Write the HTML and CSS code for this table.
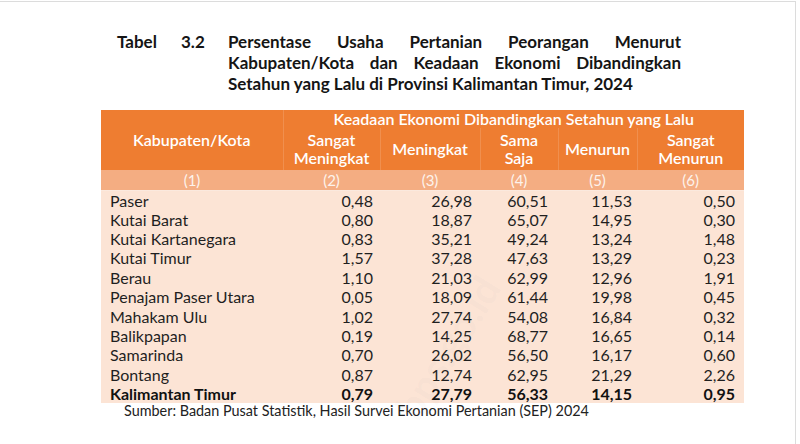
FILE: index.html
```html
<!DOCTYPE html>
<html lang="id">
<head>
<meta charset="utf-8">
<title>Tabel 3.2</title>
<link rel="stylesheet" href="styles.css">
</head>
<body>
<div class="frame">
  <div class="page">
    <div class="title">
      <div class="t-label">Tabel</div>
      <div class="t-num">3.2</div>
      <div class="t-text">Persentase Usaha Pertanian Peorangan Menurut Kabupaten/Kota dan Keadaan Ekonomi Dibandingkan Setahun yang Lalu di Provinsi Kalimantan Timur, 2024</div>
    </div>
    <table class="data">
      <colgroup>
        <col class="w1"><col class="w2"><col class="w3"><col class="w4"><col class="w5"><col class="w6">
      </colgroup>
      <thead>
        <tr class="h1">
          <th rowspan="2" class="kab">Kabupaten/Kota</th>
          <th colspan="5" class="span">Keadaan Ekonomi Dibandingkan Setahun yang Lalu</th>
        </tr>
        <tr class="h2">
          <th>Sangat<br>Meningkat</th>
          <th>Meningkat</th>
          <th>Sama<br>Saja</th>
          <th>Menurun</th>
          <th>Sangat<br>Menurun</th>
        </tr>
        <tr class="h3">
          <th>(1)</th><th>(2)</th><th>(3)</th><th>(4)</th><th>(5)</th><th>(6)</th>
        </tr>
      </thead>
      <tbody>
        <tr><td>Paser</td><td>0,48</td><td>26,98</td><td>60,51</td><td>11,53</td><td>0,50</td></tr>
        <tr><td>Kutai Barat</td><td>0,80</td><td>18,87</td><td>65,07</td><td>14,95</td><td>0,30</td></tr>
        <tr><td>Kutai Kartanegara</td><td>0,83</td><td>35,21</td><td>49,24</td><td>13,24</td><td>1,48</td></tr>
        <tr><td>Kutai Timur</td><td>1,57</td><td>37,28</td><td>47,63</td><td>13,29</td><td>0,23</td></tr>
        <tr><td>Berau</td><td>1,10</td><td>21,03</td><td>62,99</td><td>12,96</td><td>1,91</td></tr>
        <tr><td>Penajam Paser Utara</td><td>0,05</td><td>18,09</td><td>61,44</td><td>19,98</td><td>0,45</td></tr>
        <tr><td>Mahakam Ulu</td><td>1,02</td><td>27,74</td><td>54,08</td><td>16,84</td><td>0,32</td></tr>
        <tr><td>Balikpapan</td><td>0,19</td><td>14,25</td><td>68,77</td><td>16,65</td><td>0,14</td></tr>
        <tr><td>Samarinda</td><td>0,70</td><td>26,02</td><td>56,50</td><td>16,17</td><td>0,60</td></tr>
        <tr><td>Bontang</td><td>0,87</td><td>12,74</td><td>62,95</td><td>21,29</td><td>2,26</td></tr>
        <tr class="total"><td>Kalimantan Timur</td><td>0,79</td><td>27,79</td><td>56,33</td><td>14,15</td><td>0,95</td></tr>
      </tbody>
    </table>
    <div class="source">Sumber: Badan Pusat Statistik, Hasil Survei Ekonomi Pertanian (SEP) 2024</div>
  </div>
  <span class="watermark">bps.go.id</span>
</div>
</body>
</html>
```
FILE: styles.css
```css
* { box-sizing: border-box; }
html, body { margin: 0; padding: 0; background: #fff; }
body {
  font-family: Lato, "Open Sans", sans-serif;
  color: #1e1e1e;
  width: 800px;
  height: 444px;
  overflow: hidden;
}
.frame {
  position: relative;
  width: 796px;
  height: 444px;
  margin-top: 1px;
  border-top: 1px solid #dcdcdc;
  border-right: 1px solid #dcdcdc;
  overflow: hidden;
}
.page {
  padding: 29px 0 0 101px;
}
.title {
  display: flex;
  margin-left: 16px;
  font-weight: 700;
  font-size: 17px;
  line-height: 21px;
  color: #151515;
}
.t-label { width: 64px; flex: none; }
.t-num { width: 47px; flex: none; }
.t-text {
  width: 453px;
  flex: none;
  text-align: justify;
}
.data {
  margin-top: 16px;
  border-collapse: collapse;
  table-layout: fixed;
  width: 643px;
  font-size: 16px;
}
.w1 { width: 182px; }
.w2 { width: 97px; }
.w3 { width: 100px; }
.w4 { width: 78px; }
.w5 { width: 79px; }
.w6 { width: 107px; }
.data th {
  font-weight: 600;
  color: #fff;
  text-align: center;
  padding: 0;
  line-height: 18px;
}
.h1 th, .h2 th {
  background: #ee7d31;
  border-left: 1px solid rgba(255, 255, 255, 0.14);
}
.h1 th:first-child { border-left: none; }
.h1 th.span { height: 18px; vertical-align: middle; }
.h1 th.kab { border-left: none; }
.h2 th { height: 42px; }
.h3 th {
  background: #f4ad82;
  font-weight: 400;
  font-size: 15px;
  height: 20px;
  color: #fdf3ec;
  border-bottom: 1px solid #fbe9de;
}
.data td {
  background: #fce4d5;
  height: 19.4px;
  line-height: 19px;
  padding: 0;
  text-align: right;
  color: #1f1f1f;
}
.data td:nth-child(1) { text-align: left; padding-left: 9px; }
.data td:nth-child(2) { padding-right: 7px; }
.data td:nth-child(3) { padding-right: 8px; }
.data td:nth-child(4) { padding-right: 10px; }
.data td:nth-child(5) { padding-right: 5px; }
.data td:nth-child(6) { padding-right: 9px; }
.total td { font-weight: 700; color: #111; }
.source {
  margin: 0 0 0 23px;
  font-size: 14.4px;
  line-height: 16px;
  color: #222;
}
.watermark {
  position: absolute;
  left: 385px;
  top: 400px;
  font-size: 40px;
  font-weight: 700;
  color: rgba(150, 150, 150, 0.05);
  transform: rotate(-58deg);
  transform-origin: left top;
  white-space: nowrap;
}
```
